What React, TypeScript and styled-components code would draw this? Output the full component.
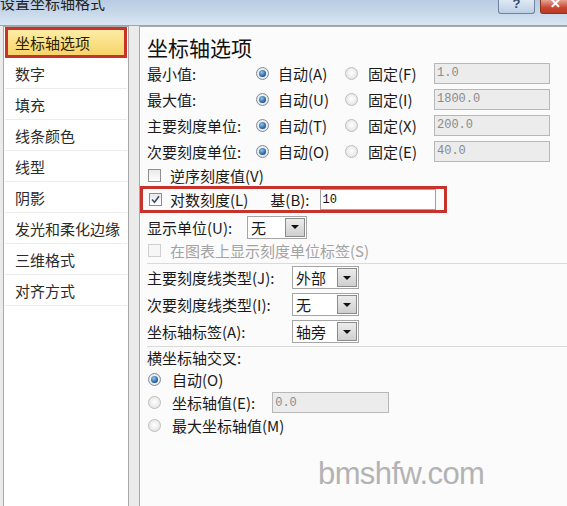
import styled, { createGlobalStyle } from 'styled-components';

const GlobalStyle = createGlobalStyle`
  html, body {
    margin: 0;
    padding: 0;
  }
  body {
    width: 567px;
    height: 506px;
    overflow: hidden;
    font-family: "Noto Sans CJK SC", "Liberation Sans", sans-serif;
    color: #1a1a1a;
  }
`;

const Window = styled.div`
  position: relative;
  width: 567px;
  height: 506px;
  overflow: hidden;
  display: flex;
  flex-direction: column;
  background: #ebebeb;
`;

const TitleBar = styled.div`
  height: 25px;
  flex: none;
  display: flex;
  justify-content: space-between;
  align-items: flex-start;
  background: linear-gradient(#b7cbe2, #d9e5f1);
  border-bottom: 1px solid #9ba5b1;
`;

const Title = styled.div`
  margin-top: -5px;
  font-size: 15px;
  line-height: 16px;
  color: #222;
`;

const TitleButtons = styled.div`
  display: flex;
  gap: 5px;
  margin-right: -3px;
`;

const CaptionButton = styled.div<{ $close?: boolean }>`
  width: ${(p) => (p.$close ? 30 : 37)}px;
  height: 14px;
  box-sizing: border-box;
  border: 1px solid ${(p) => (p.$close ? '#8a3426' : '#72849c')};
  border-top: none;
  border-radius: 0 0 3px 3px;
  background: ${(p) =>
    p.$close
      ? 'linear-gradient(#e4a392, #c9452f 60%, #b83a25)'
      : 'linear-gradient(#dfe9f5, #bccee4)'};
  color: ${(p) => (p.$close ? '#fff' : '#33476a')};
  font: bold 13px/8px "Liberation Sans", sans-serif;
  text-align: center;
  overflow: hidden;
`;

const Body = styled.div`
  flex: 1;
  display: flex;
  gap: 10px;
  padding-left: 3px;
  min-height: 0;
`;

const NavList = styled.div`
  width: 122px;
  flex: none;
  padding: 0 1px;
  background: #fff;
  border: 1px solid #a9a9a9;
  border-bottom: none;
`;

const NavItem = styled.div<{ $selected?: boolean }>`
  height: 31px;
  box-sizing: border-box;
  display: flex;
  align-items: center;
  font-size: 15px;
  padding-left: ${(p) => (p.$selected ? 7 : 10)}px;
  border: ${(p) => (p.$selected ? '3px solid #c7322b' : 'none')};
  border-bottom: ${(p) => (p.$selected ? '3px solid #c7322b' : '1px solid #ececec')};
  background: ${(p) => (p.$selected ? 'linear-gradient(#fdeda6, #f8d469)' : 'transparent')};
  color: ${(p) => (p.$selected ? '#2a2000' : '#2b2b2b')};
`;

const Panel = styled.div`
  flex: 1;
  padding: 7px 0 0 7px;
  background: #fbfbfb;
  border: 1px solid #a9a9a9;
  border-right: none;
  border-bottom: none;
  font-size: 15px;
`;

const Heading = styled.div`
  height: 26px;
  font-size: 21px;
  line-height: 26px;
  color: #111;
`;

const AxisRow = styled.div`
  height: 26px;
  display: grid;
  grid-template-columns: 109px 89px 89px 116px;
  align-items: center;
`;

const Option = styled.label<{ $gap?: number; $disabled?: boolean }>`
  display: flex;
  align-items: center;
  gap: ${(p) => p.$gap ?? 9}px;
  white-space: nowrap;
  color: ${(p) => (p.$disabled ? '#a3a3a3' : 'inherit')};
`;

const Radio = styled.span<{ $checked?: boolean }>`
  width: 13px;
  height: 13px;
  flex: none;
  box-sizing: border-box;
  border-radius: 50%;
  border: 1px solid ${(p) => (p.$checked ? '#7f8c9c' : '#bdbdbd')};
  background: radial-gradient(circle at 50% 45%, #ffffff, #dcdcdc);
  display: flex;
  align-items: center;
  justify-content: center;
  &::after {
    content: '';
    display: ${(p) => (p.$checked ? 'block' : 'none')};
    width: 7px;
    height: 7px;
    border-radius: 50%;
    background: radial-gradient(circle at 40% 35%, #8cc9ef, #245d9c 65%, #12365f);
  }
`;

const Check = styled.span<{ $disabled?: boolean }>`
  width: 13px;
  height: 13px;
  flex: none;
  box-sizing: border-box;
  border: 1px solid ${(p) => (p.$disabled ? '#cfcfcf' : '#8e8e8e')};
  background: ${(p) => (p.$disabled ? '#f6f6f6' : 'linear-gradient(#e9e9e9, #ffffff)')};
  display: flex;
  align-items: center;
  justify-content: center;
`;

const Field = styled.input<{ $width: number; $active?: boolean }>`
  width: ${(p) => p.$width}px;
  height: 21px;
  box-sizing: border-box;
  padding: 0 0 0 2px;
  border: 1px solid ${(p) => (p.$active ? '#a2a2a2' : '#b7b7b7')};
  background: ${(p) => (p.$active ? '#fff' : '#ececec')};
  color: ${(p) => (p.$active ? '#111' : '#8a8a8a')};
  font: 12px "Liberation Mono", monospace;
  outline: none;
`;

const CheckRow = styled.div<{ $height: number }>`
  height: ${(p) => p.$height}px;
  display: flex;
  align-items: center;
  padding-left: 1px;
`;

const Highlight = styled.div`
  width: 307px;
  height: 27px;
  box-sizing: border-box;
  margin-left: -7px;
  border: 3px solid #c7322b;
  padding: 0 6px 0 6px;
  display: flex;
  align-items: center;
`;

const BaseLabel = styled.span`
  margin-left: 22px;
  margin-right: 10px;
  white-space: nowrap;
`;

const SelectRow = styled.div<{ $height: number; $label: number }>`
  height: ${(p) => p.$height}px;
  display: grid;
  grid-template-columns: ${(p) => p.$label}px auto;
  align-items: center;
  justify-content: start;
`;

const Select = styled.div<{ $width: number }>`
  width: ${(p) => p.$width}px;
  height: 23px;
  box-sizing: border-box;
  border: 1px solid #a5a5a5;
  background: #fff;
  display: flex;
  align-items: center;
  justify-content: space-between;
  padding: 0 1px 0 3px;
`;

const DropButton = styled.span`
  width: 20px;
  height: 19px;
  box-sizing: border-box;
  border: 1px solid #8b8b8b;
  background: linear-gradient(#ececec, #cfcfcf);
  display: flex;
  align-items: center;
  justify-content: center;
  &::after {
    content: '';
    border-left: 4px solid transparent;
    border-right: 4px solid transparent;
    border-top: 4px solid #111;
  }
`;

const Separator = styled.div<{ $top: number }>`
  height: 1px;
  margin-top: ${(p) => p.$top}px;
  background: #dadada;
`;

const PlainRow = styled.div<{ $height: number }>`
  height: ${(p) => p.$height}px;
  display: flex;
  align-items: center;
  gap: 17px;
`;

const Watermark = styled.div`
  position: absolute;
  left: 318px;
  top: 458px;
  font: 31px/31px "Liberation Sans", sans-serif;
  letter-spacing: -0.6px;
  color: #b3b3b3;
`;

const Key = ({ k }: { k: string }) => <>({k})</>;

const CheckMark = () => (
  <svg width="9" height="9" viewBox="0 0 9 9">
    <path d="M1 4.5 L3.5 7.2 L8 1.2" fill="none" stroke="#3c4c6c" strokeWidth="1.6" />
  </svg>
);

const navItems = ['坐标轴选项', '数字', '填充', '线条颜色', '线型', '阴影', '发光和柔化边缘', '三维格式', '对齐方式'];

const axisRows = [
  { label: '最小值:', auto: 'A', fixed: 'F', value: '1.0' },
  { label: '最大值:', auto: 'U', fixed: 'I', value: '1800.0' },
  { label: '主要刻度单位:', auto: 'T', fixed: 'X', value: '200.0' },
  { label: '次要刻度单位:', auto: 'O', fixed: 'E', value: '40.0' },
];

const tickRows = [
  { label: '主要刻度线类型', k: 'J', value: '外部' },
  { label: '次要刻度线类型', k: 'I', value: '无' },
  { label: '坐标轴标签', k: 'A', value: '轴旁' },
];

export default function App() {
  return (
    <Window>
      <GlobalStyle />
      <TitleBar>
        <Title>设置坐标轴格式</Title>
        <TitleButtons>
          <CaptionButton>?</CaptionButton>
          <CaptionButton $close>✕</CaptionButton>
        </TitleButtons>
      </TitleBar>
      <Body>
        <NavList>
          {navItems.map((item, i) => (
            <NavItem key={item} $selected={i === 0}>
              {item}
            </NavItem>
          ))}
        </NavList>
        <Panel>
          <Heading>坐标轴选项</Heading>
          {axisRows.map((row) => (
            <AxisRow key={row.label}>
              <span>{row.label}</span>
              <Option>
                <Radio $checked />
                <span>
                  自动<Key k={row.auto} />
                </span>
              </Option>
              <Option $gap={10}>
                <Radio />
                <span>
                  固定<Key k={row.fixed} />
                </span>
              </Option>
              <Field $width={116} readOnly value={row.value} />
            </AxisRow>
          ))}
          <CheckRow $height={22}>
            <Option $gap={9}>
              <Check />
              <span>
                逆序刻度值<Key k="V" />
              </span>
            </Option>
          </CheckRow>
          <Highlight>
            <Option $gap={8}>
              <Check>
                <CheckMark />
              </Check>
              <span>
                对数刻度<Key k="L" />
              </span>
            </Option>
            <BaseLabel>
              基<Key k="B" />:
            </BaseLabel>
            <Field $width={116} $active readOnly value="10" />
          </Highlight>
          <SelectRow $height={28} $label={100}>
            <span>
              显示单位<Key k="U" />:
            </span>
            <Select $width={60}>
              <span>无</span>
              <DropButton />
            </Select>
          </SelectRow>
          <CheckRow $height={18}>
            <Option $gap={9} $disabled>
              <Check $disabled />
              <span>
                在图表上显示刻度单位标签<Key k="S" />
              </span>
            </Option>
          </CheckRow>
          <Separator $top={4} />
          {tickRows.map((row) => (
            <SelectRow key={row.label} $height={27} $label={145}>
              <span>
                {row.label}
                <Key k={row.k} />:
              </span>
              <Select $width={67}>
                <span>{row.value}</span>
                <DropButton />
              </Select>
            </SelectRow>
          ))}
          <Separator $top={1} />
          <PlainRow $height={21}>横坐标轴交叉:</PlainRow>
          <CheckRow $height={23}>
            <Option $gap={11}>
              <Radio $checked />
              <span>
                自动<Key k="O" />
              </span>
            </Option>
          </CheckRow>
          <CheckRow $height={23}>
            <PlainRow $height={23}>
              <Option $gap={11}>
                <Radio />
                <span>
                  坐标轴值<Key k="E" />:
                </span>
              </Option>
              <Field $width={117} readOnly value="0.0" />
            </PlainRow>
          </CheckRow>
          <CheckRow $height={23}>
            <Option $gap={11}>
              <Radio />
              <span>
                最大坐标轴值<Key k="M" />
              </span>
            </Option>
          </CheckRow>
        </Panel>
      </Body>
      <Watermark>bmshfw.com</Watermark>
    </Window>
  );
}
